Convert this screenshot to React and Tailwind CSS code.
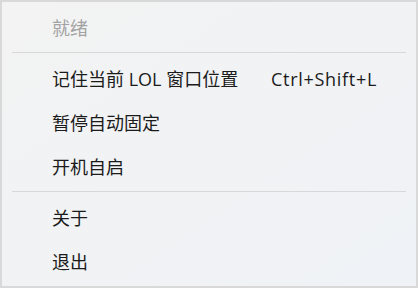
import React from "react";

const items = [
  { label: "就绪", disabled: true },
  { sep: true },
  { label: "记住当前 LOL 窗口位置", shortcut: "Ctrl+Shift+L" },
  { label: "暂停自动固定" },
  { label: "开机自启" },
  { sep: true },
  { label: "关于" },
  { label: "退出" },
];

export default function App() {
  return (
    <div
      className="w-[418px] h-[288px] border-2 border-[#d9d9d9] bg-gradient-to-br from-[#f3f3f3] to-[#eff2f6] flex flex-col pt-[4px]"
      style={{ fontFamily: '"Open Sans", "Noto Sans CJK SC", sans-serif' }}
    >
      {items.map((it, i) =>
        it.sep ? (
          <div key={i} className="mx-[10px] mt-[2px] mb-[4px] h-px bg-[#d8d8d8] shrink-0" />
        ) : (
          <div
            key={i}
            className={`h-[44px] shrink-0 flex items-center pl-[50px] pr-[39px] text-[18px] ${
              it.disabled ? "text-[#a3a3a3]" : "text-[#1b1b1b]"
            }`}
          >
            <span className="flex-1">{it.label}</span>
            {it.shortcut && <span className="tracking-[0.7px]">{it.shortcut}</span>}
          </div>
        )
      )}
    </div>
  );
}
